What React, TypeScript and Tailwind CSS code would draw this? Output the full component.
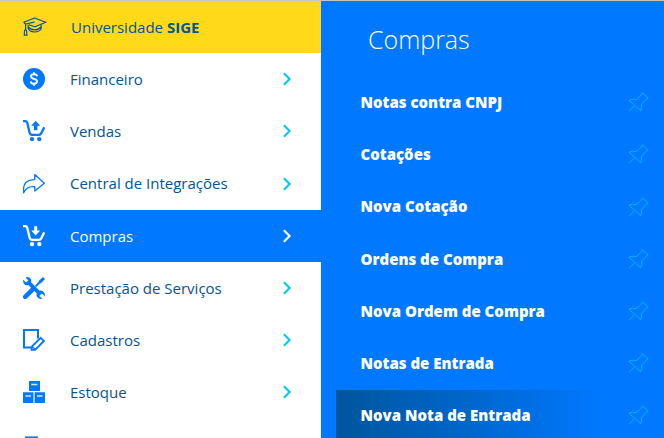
import type { ReactNode } from 'react';

const GraduationIcon = () => (
  <svg width="24" height="22" viewBox="0 0 24 22" fill="none" stroke="#00559c" strokeWidth="1.2" strokeLinejoin="round" className="block">
    <path d="M0.7 6.2 11.5 2 22.8 6.3 12 10.8 5.8 8.8" />
    <path d="M11.5 6.2 2.6 8V14M0.7 6.2 2.6 8M1.7 14H3.4L4 19.2H1.2Z" />
    <path d="M5.2 8.8V12.6C7 17 15.5 17.2 18.2 12.8V8.6M5.6 11.2C8.5 14.8 14.8 14.8 18 11" />
  </svg>
);

const DollarIcon = () => (
  <svg width="22" height="22" viewBox="0 0 22 22" className="block">
    <circle cx="11" cy="11" r="11" fill="#0078ff" />
    <path d="M14.2 8.3C13.8 6.8 12.6 6.3 11 6.3 9.2 6.3 8 7.2 8 8.6 8 11.6 14.1 10.2 14.1 13.3 14.1 14.9 12.7 15.7 11 15.7 9.1 15.7 7.9 14.9 7.7 13.3M11 4.3V6.5M11 15.5V17.7" fill="none" stroke="#fff" strokeWidth="1.9" />
  </svg>
);

const CartIcon = ({ up = false, color }: { up?: boolean; color: string }) => (
  <svg width="22" height="22" viewBox="0 0 22 22" className="block">
    <path d="M0 1.2H2.3Q3.7 1.2 4.2 2.6L6.5 12.3Q7.1 14.8 9 14.8H16Q17.4 14.8 18.3 13.1L21.3 7.4" fill="none" stroke={color} strokeWidth="2.3" />
    <circle cx="9" cy="19.1" r="2.2" fill={color} />
    <circle cx="16.3" cy="19.1" r="2.2" fill={color} />
    {up ? (
      <path d="M12.7 0.8 17.3 5.8H14.4V10.2H11V5.8H8.1Z" fill={color} />
    ) : (
      <path d="M12.7 10.6 17.2 5.6H14.2V1.2H11.2V5.6H8.3Z" fill={color} />
    )}
  </svg>
);

const ShareIcon = () => (
  <svg width="22" height="22" viewBox="0 0 22 22" fill="none" stroke="#0078ff" strokeWidth="1.3" strokeLinejoin="round" className="block">
    <path d="M0.7 19.8C-0.6 10.5 3.5 6.8 11.8 6.6V1.6L21.3 10.2 11.8 18V13.6C6 13.1 2.5 14.9 0.7 19.8Z" />
  </svg>
);

const ToolsIcon = () => (
  <svg width="22" height="22" viewBox="0 0 22 22" className="block">
    <path d="M2.2 19.8 10 12.2" stroke="#0078ff" strokeWidth="4.6" strokeLinecap="round" />
    <path d="M12.6 9.4 17.5 4.5" stroke="#0078ff" strokeWidth="2" />
    <path d="M15.4 4.3 20 0 22 2 17.7 6.6Z" fill="#0078ff" />
    <path d="M2.5.4Q6 -.7 7.8 2 8.6 3.5 8 5.2L16.6 13.8Q18.4 13.2 20 14.2 22.4 16 21.8 19.2L18.8 16.4 16.3 18.9 19.3 21.8Q16 22.4 14.2 20 13.1 18.3 13.8 16.6L5.3 8.1Q3.6 8.8 1.9 7.7-.4 6 .2 2.8L3 5.6 5.3 3.3Z" fill="#0078ff" />
  </svg>
);

const NoteIcon = () => (
  <svg width="22" height="22" viewBox="0 0 22 22" fill="none" stroke="#0078ff" strokeWidth="2" className="block">
    <path d="M9.5 18.6H1V1H15V9.5" />
    <path d="M17.7 8.9 20.9 12 12.2 20.9H8.6V17.8Z" strokeWidth="1.9" />
    <path d="M9 17.5 12.3 20.5" strokeWidth="1.2" />
  </svg>
);

const BoxesIcon = () => (
  <svg width="22" height="22" viewBox="0 0 22 22" className="block">
    <path d="M6 0H17V10H6ZM0 11.3H10.4V22H0ZM11.6 11.3H22V22H11.6Z" fill="#0078ff" />
    <path d="M8.3 3.5H14.3M2.5 15H8M14 15H19.5" stroke="#d5eaff" strokeWidth="1.3" />
  </svg>
);

const PageIcon = () => (
  <svg width="22" height="22" viewBox="0 0 22 22" fill="#0078ff" className="block">
    <path d="M2 3.4H15V20H2Z" />
  </svg>
);

const Chevron = ({ color }: { color: string }) => (
  <svg width="9" height="14" viewBox="0 0 9 14" className="block">
    <path d="M0.9 1.3 6.6 7 0.9 12.7" fill="none" stroke={color} strokeWidth="2.1" />
  </svg>
);

const Pin = () => (
  <svg width="21" height="20" viewBox="0 0 21 20" fill="none" stroke="#00b4ff" strokeWidth="1" strokeLinejoin="round" className="block">
    <path d="M14.5 0.8 20.2 6.4 18.2 7.2 13.6 12.3Q14 15.5 12.7 18.8L1 8.2Q4.6 6.8 8.5 7.5L13.6 2.8ZM6.8 13.5 1 19.2" />
  </svg>
);

const menu: { label: string; icon: ReactNode; active?: boolean }[] = [
  { label: 'Financeiro', icon: <DollarIcon /> },
  { label: 'Vendas', icon: <CartIcon up color="#0078ff" /> },
  { label: 'Central de Integrações', icon: <ShareIcon /> },
  { label: 'Compras', icon: <CartIcon color="#fff" />, active: true },
  { label: 'Prestação de Serviços', icon: <ToolsIcon /> },
  { label: 'Cadastros', icon: <NoteIcon /> },
  { label: 'Estoque', icon: <BoxesIcon /> },
  { label: '', icon: <PageIcon /> },
];

const links = [
  'Notas contra CNPJ',
  'Cotações',
  'Nova Cotação',
  'Ordens de Compra',
  'Nova Ordem de Compra',
  'Notas de Entrada',
  'Nova Nota de Entrada',
];

export default function App() {
  return (
    <div className="flex h-[438px] w-[664px] overflow-hidden border-t border-[#c6c6c6] bg-white font-['Open_Sans',sans-serif] text-[15px]">
      <nav className="w-[321px] shrink-0 text-[#00559c]">
        <a className="flex h-[52.17px] items-center bg-[#ffd91a] pl-[23px]">
          <span className="w-12"><GraduationIcon /></span>
          <span>Universidade <b className="font-bold">SIGE</b></span>
        </a>
        {menu.map((item, i) => (
          <a key={i} className={`flex h-[52.17px] items-center pr-[29px] pl-[23px] ${item.active ? 'bg-[#0078ff] pt-px text-white' : ''}`}>
            <span className="w-[47px] shrink-0">{item.icon}</span>
            <span className="grow">{item.label}</span>
            {item.label && <Chevron color={item.active ? '#fff' : '#00c8ff'} />}
          </a>
        ))}
      </nav>
      <section className="grow bg-[#0078ff] pl-[15px] text-white">
        <h1 className="h-[76px] pt-5 pl-8 text-[25px] leading-9 font-light">Compras</h1>
        {links.map((label, i) => (
          <a
            key={label}
            className={`flex h-[52.17px] items-center justify-between pr-[15px] pb-[1.5px] pl-[24.5px] font-extrabold ${
              i === links.length - 1 ? 'bg-linear-to-r from-[#00559c] to-[#0078ff] to-[81%]' : ''
            }`}
          >
            <span>{label}</span>
            <Pin />
          </a>
        ))}
      </section>
    </div>
  );
}
